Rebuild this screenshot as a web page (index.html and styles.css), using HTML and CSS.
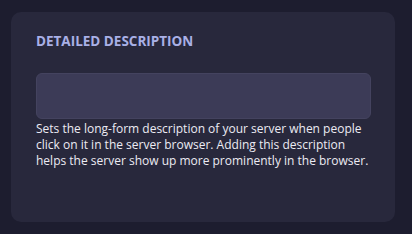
FILE: index.html
```html
<!DOCTYPE html>
<html lang="en">
<head>
  <meta charset="UTF-8">
  <meta name="viewport" content="width=device-width, initial-scale=1.0">
  <title>Detailed Description</title>
  <link rel="stylesheet" href="styles.css">
</head>
<body>
  <div class="card">
    <h2 class="card-title">DETAILED DESCRIPTION</h2>
    <textarea class="desc-input"></textarea>
    <p class="hint">Sets the long-form description of your server when people click on it in the server browser. Adding this description helps the server show up more prominently in the browser.</p>
  </div>
</body>
</html>
```

FILE: styles.css
```css
body {
  margin: 0;
  padding: 12px 17px 12px 11px;
  background-color: #1d1d2f;
  font-family: 'Open Sans', sans-serif;
  height: 234px;
  box-sizing: border-box;
}

.card {
  background-color: #28283c;
  border-radius: 10px;
  padding: 21px 24px 0 25px;
  height: 210px;
  box-sizing: border-box;
}

.card-title {
  margin: 0 0 23px;
  font-size: 13.5px;
  font-weight: bold;
  color: #a9b0e6;
  line-height: 17px;
}

.desc-input {
  display: block;
  width: 100%;
  height: 46px;
  box-sizing: border-box;
  background-color: #3c3b57;
  border: 1px solid #44435f;
  border-radius: 6px;
  resize: none;
  margin: 0;
}

.hint {
  margin: 2px 0 0;
  font-size: 12px;
  line-height: 16px;
  color: #ecebf3;
}
```
